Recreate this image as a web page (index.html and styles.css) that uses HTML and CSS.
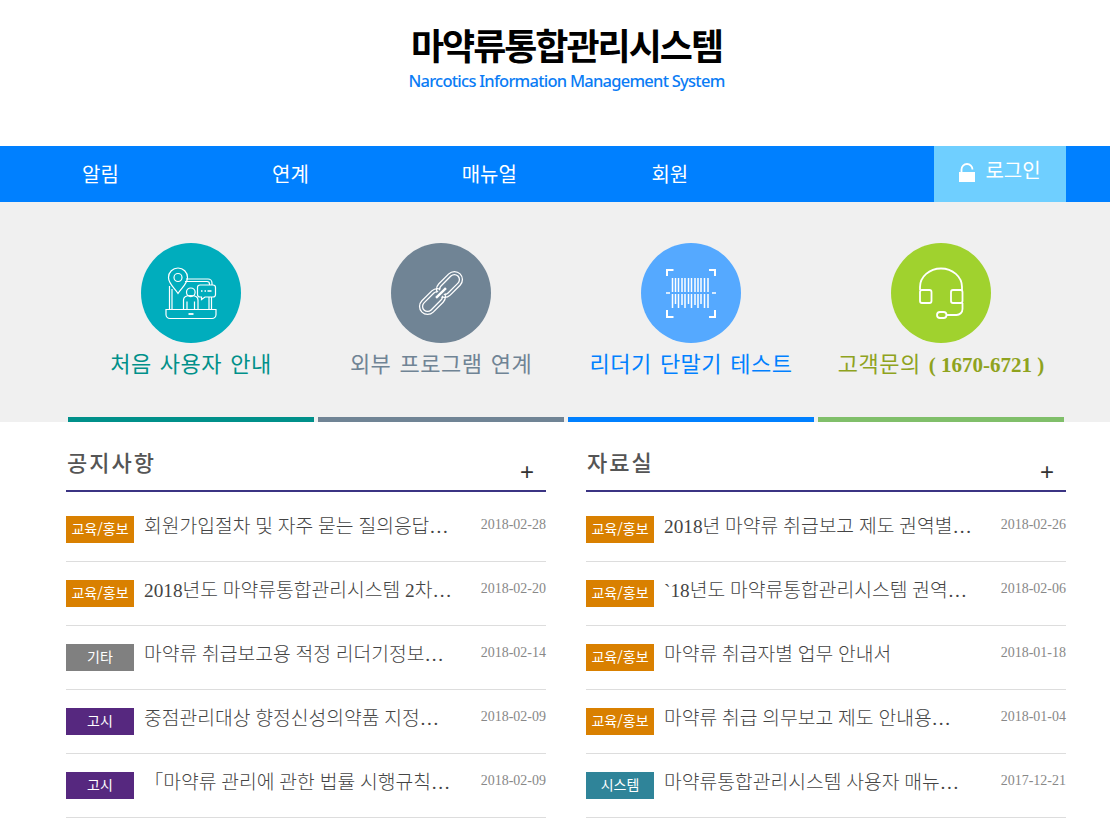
FILE: index.html
```html
<!DOCTYPE html>
<html lang="ko">
<head>
  <meta charset="UTF-8">
  <meta name="viewport" content="width=device-width, initial-scale=1">
  <title>마약류통합관리시스템</title>
  <link rel="stylesheet" href="styles.css">
</head>
<body>
  <!-- Header -->
  <header class="site-header">
    <h1 class="logo-title">마약류통합관리시스템</h1>
    <p class="logo-sub">Narcotics Information Management System</p>
  </header>

  <!-- Nav -->
  <nav class="main-nav">
    <div class="nav-inner">
      <ul class="nav-menu">
        <li>알림</li>
        <li>연계</li>
        <li>매뉴얼</li>
        <li>회원</li>
      </ul>
      <a class="login-btn" href="#">
        <svg class="lock-icon" viewBox="0 0 16 19" width="16" height="19">
          <path d="M2.500 9V6.500a5.500 5.500 0 0 1 11 0" fill="none" stroke="#fff" stroke-width="1.800"/>
          <rect x="0" y="9" width="16" height="10" fill="#fff"/>
        </svg>
        <span class="login-text">로그인</span>
      </a>
    </div>
  </nav>

  <!-- Quick links -->
  <section class="quick">
    <div class="quick-inner">
      <a class="quick-item quick-guide" href="#">
        <span class="quick-circle">
          <svg viewBox="0 0 100 100" width="100" height="100" fill="none" stroke="#fff" stroke-width="1.200">
            <path d="M45 36h22a4 4 0 0 1 4 4v2"/>
            <path d="M44 38.500h22a2.500 2.500 0 0 1 2.500 2.500v1"/>
            <path d="M28.500 43v23.500M31 46v20.500M68 54v12.500M70.500 54v12.500"/>
            <path d="M25 66.500h50v5a4 4 0 0 1-4 4H29a4 4 0 0 1-4-4z"/>
            <path d="M47.500 71h5" stroke-width="1.800"/>
            <path d="M37 50.500c-4-6-9.500-10-9.500-16a9.500 9.500 0 0 1 19 0c0 6-5.500 10-9.500 16z"/>
            <circle cx="37" cy="34.500" r="4"/>
            <circle cx="49.800" cy="49.300" r="4.300"/>
            <path d="M42.500 66.500V57c0-3 3-4.500 7.300-4.500s7.200 1.500 7.200 4.500v9.500M46 66.500v-8M53.500 66.500v-8"/>
            <path d="M59 42h13a2.500 2.500 0 0 1 2.500 2.500v7a2.500 2.500 0 0 1-2.500 2.500H64l-3.500 2.500V54H59a2.500 2.500 0 0 1-2.500-2.500v-7A2.500 2.500 0 0 1 59 42z"/>
            <path d="M60 48h1.500M63.500 48h1.500M66.500 48h4" stroke-width="1.400"/>
          </svg>
        </span>
        <strong>처음 사용자 안내</strong>
      </a>
      <a class="quick-item quick-link" href="#">
        <span class="quick-circle">
          <svg viewBox="0 0 100 100" width="100" height="100" fill="none" stroke="#fff" stroke-width="1.300">
            <g transform="rotate(-45 50 50)">
              <rect x="47" y="42" width="30" height="16" rx="8"/>
              <rect x="50" y="45" width="24" height="10" rx="5"/>
              <rect x="23" y="42" width="30" height="16" rx="8"/>
              <rect x="26" y="45" width="24" height="10" rx="5"/>
              <path d="M43 50h14" stroke="#708495" stroke-width="6"/>
              <path d="M43 50h14" stroke-width="2.400"/>
            </g>
          </svg>
        </span>
        <strong>외부 프로그램 연계</strong>
      </a>
      <a class="quick-item quick-reader" href="#">
        <span class="quick-circle">
          <svg viewBox="0 0 100 100" width="100" height="100" fill="none" stroke="#fff">
            <path d="M26 33v-6h6.500M68 27h6v6M26 67v7h6.500M68 74h6v-7" stroke-width="2"/>
            <path d="M25 50h4M71 50h4" stroke-width="1.600"/>
            <path d="M31.500 35v14M34.500 35v14M37.500 35v14M41 35v14M44 35v14M47.500 35v14M50.500 35v14M54 35v14M57 35v14M60 35v14M63.500 35v14M67 35v14" stroke-width="1.500"/>
            <path d="M31.500 51v14M34.500 51v10M37.500 51v14M41 51v11M44 51v14M47.500 51v10M50.500 51v14M54 51v11M57 51v14M60 51v10M63.500 51v14M67 51v14" stroke-width="1.500"/>
          </svg>
        </span>
        <strong>리더기 단말기 테스트</strong>
      </a>
      <a class="quick-item quick-call" href="#">
        <span class="quick-circle">
          <svg viewBox="0 0 100 100" width="100" height="100" fill="none" stroke="#fff" stroke-width="1.800">
            <path d="M29 47v-3a21 18.500 0 0 1 42 0v3"/>
            <rect x="29" y="47" width="11.500" height="13" rx="2"/>
            <rect x="60" y="47" width="11.500" height="13" rx="2"/>
            <path d="M71.500 60v6a6 6 0 0 1-6 6H55"/>
            <rect x="46" y="69" width="9.500" height="6" rx="3"/>
          </svg>
        </span>
        <strong>고객문의 <b class="phone">( 1670-6721 )</b></strong>
      </a>
    </div>
  </section>

  <!-- Boards -->
  <main class="boards">
    <section class="board">
      <div class="board-head">
        <h2>공지사항</h2>
        <a class="more" href="#">+</a>
      </div>
      <ul class="board-list">
        <li><span class="tag tag-edu">교육/홍보</span><a class="subject">회원가입절차 및 자주 묻는 질의응답…</a><span class="date">2018-02-28</span></li>
        <li><span class="tag tag-edu">교육/홍보</span><a class="subject">2018년도 마약류통합관리시스템 2차…</a><span class="date">2018-02-20</span></li>
        <li><span class="tag tag-etc">기타</span><a class="subject">마약류 취급보고용 적정 리더기정보…</a><span class="date">2018-02-14</span></li>
        <li><span class="tag tag-notice">고시</span><a class="subject">중점관리대상 향정신성의약품 지정…</a><span class="date">2018-02-09</span></li>
        <li><span class="tag tag-notice">고시</span><a class="subject">「마약류 관리에 관한 법률 시행규칙…</a><span class="date">2018-02-09</span></li>
      </ul>
    </section>
    <section class="board">
      <div class="board-head">
        <h2>자료실</h2>
        <a class="more" href="#">+</a>
      </div>
      <ul class="board-list">
        <li><span class="tag tag-edu">교육/홍보</span><a class="subject">2018년 마약류 취급보고 제도 권역별…</a><span class="date">2018-02-26</span></li>
        <li><span class="tag tag-edu">교육/홍보</span><a class="subject">`18년도 마약류통합관리시스템 권역…</a><span class="date">2018-02-06</span></li>
        <li><span class="tag tag-edu">교육/홍보</span><a class="subject">마약류 취급자별 업무 안내서</a><span class="date">2018-01-18</span></li>
        <li><span class="tag tag-edu">교육/홍보</span><a class="subject">마약류 취급 의무보고 제도 안내용…</a><span class="date">2018-01-04</span></li>
        <li><span class="tag tag-system">시스템</span><a class="subject">마약류통합관리시스템 사용자 매뉴…</a><span class="date">2017-12-21</span></li>
      </ul>
    </section>
  </main>
</body>
</html>
```

FILE: styles.css
```css
* {
  box-sizing: border-box;
}
body {
  font-family: "Liberation Serif", "Noto Sans CJK KR", serif;
  background-color: #fff;
  color: #444;
  margin: 0;
  padding: 0;
  height: 819px;
  overflow: hidden;
}
a {
  color: inherit;
  text-decoration: none;
}
ul {
  list-style: none;
  margin: 0;
  padding: 0;
}
/* Header */
.site-header {
  height: 146px;
  padding-top: 19px;
  text-align: center;
}
.logo-title {
  margin: 0;
  font-family: "Noto Sans CJK KR", sans-serif;
  font-size: 36px;
  line-height: 50px;
  font-weight: 700;
  letter-spacing: -2px;
  color: #000;
  padding-left: 23px;
}
.logo-sub {
  margin: 1px 0 0;
  font-family: "Noto Sans", sans-serif;
  font-size: 16.500px;
  line-height: 22px;
  font-weight: 500;
  letter-spacing: -0.750px;
  color: #0a7cf5;
  padding-left: 23px;
}
/* Nav */
.main-nav {
  height: 56px;
  background-color: #0080ff;
}
.nav-inner {
  display: flex;
  justify-content: space-between;
  width: 1066px;
}
.nav-menu {
  display: flex;
}
.nav-menu li {
  width: 189.700px;
  white-space: nowrap;
  color: #fff;
  font-family: "Noto Sans CJK KR", sans-serif;
  font-size: 20px;
  line-height: 56px;
}
.nav-menu li:first-child {
  width: 272px;
  padding-left: 82px;
}
.login-btn {
  display: flex;
  align-items: center;
  justify-content: center;
  gap: 10px;
  width: 132px;
  height: 56px;
  background-color: #6fcfff;
  color: #fff;
  font-family: "Noto Sans CJK KR", sans-serif;
  font-size: 20px;
}
.lock-icon {
  margin-bottom: 3px;
}
.login-text {
  margin-bottom: 9px;
  line-height: 28px;
}
/* Quick links */
.quick {
  height: 220px;
  background-color: #f0f0f0;
}
.quick-inner {
  display: flex;
  width: 1000px;
  margin-left: 66px;
  height: 100%;
}
.quick-item {
  display: flex;
  flex-direction: column;
  align-items: center;
  width: 246px;
  margin: 0 2px;
  padding-top: 41px;
  border-bottom: 5px solid #999;
  white-space: nowrap;
  font-size: 22px;
  letter-spacing: 0.500px;
  word-spacing: 1.500px;
}
.quick-item strong {
  margin-top: 4px;
  line-height: 30px;
  font-weight: 400;
  font-family: "Noto Sans CJK KR", sans-serif;
}
.phone {
  font-family: "Liberation Serif", serif;
  font-size: 21px;
  font-weight: 700;
  letter-spacing: 0;
  word-spacing: 0;
}
.quick-circle {
  display: block;
  width: 100px;
  height: 100px;
  border-radius: 50%;
}
.quick-circle svg {
  display: block;
}
.quick-guide {
  color: #00908a;
  border-color: #00908a;
}
.quick-guide .quick-circle {
  background-color: #00adbd;
}
.quick-link {
  color: #708495;
  border-color: #708495;
}
.quick-link .quick-circle {
  background-color: #708495;
}
.quick-reader {
  color: #0080ff;
  border-color: #0080ff;
}
.quick-reader .quick-circle {
  background-color: #55a9ff;
}
.quick-call {
  color: #8fa31e;
  border-color: #80bf6a;
}
.quick-call .quick-circle {
  background-color: #a0d22e;
}
/* Boards */
.boards {
  display: flex;
  gap: 40px;
  width: 1000px;
  margin-left: 66px;
  padding-top: 20px;
}
.board {
  width: 480px;
}
.board-head {
  display: flex;
  justify-content: space-between;
  height: 50px;
  border-bottom: 2px solid #3b3483;
}
.board-head h2 {
  margin: 0;
  font-family: "Noto Sans CJK KR", sans-serif;
  font-size: 22px;
  line-height: 38px;
  font-weight: 500;
  letter-spacing: 2px;
  padding-left: 1px;
  color: #555;
}
.more {
  font-family: "Liberation Sans", sans-serif;
  font-size: 24px;
  line-height: 60px;
  height: 48px;
  padding-right: 12px;
  color: #333;
}
.board-list {
  padding-top: 6px;
}
.board-list li {
  display: flex;
  height: 64px;
  padding-top: 18px;
  border-bottom: 1px solid #ddd;
}
.tag {
  flex: none;
  width: 68px;
  height: 27px;
  text-align: center;
  color: #fff;
  font-family: "Noto Sans CJK KR", sans-serif;
  font-size: 14px;
  line-height: 24px;
}
.tag-edu {
  background-color: #d98000;
}
.tag-etc {
  background-color: #808080;
}
.tag-notice {
  background-color: #56287f;
}
.tag-system {
  background-color: #2f8499;
}
.subject {
  margin-left: 10px;
  white-space: nowrap;
  font-size: 19.300px;
  font-weight: 300;
  line-height: 24px;
  margin-top: -1px;
  color: #444;
}
.date {
  margin-left: auto;
  font-size: 14px;
  line-height: 18px;
  color: #888;
}
```
